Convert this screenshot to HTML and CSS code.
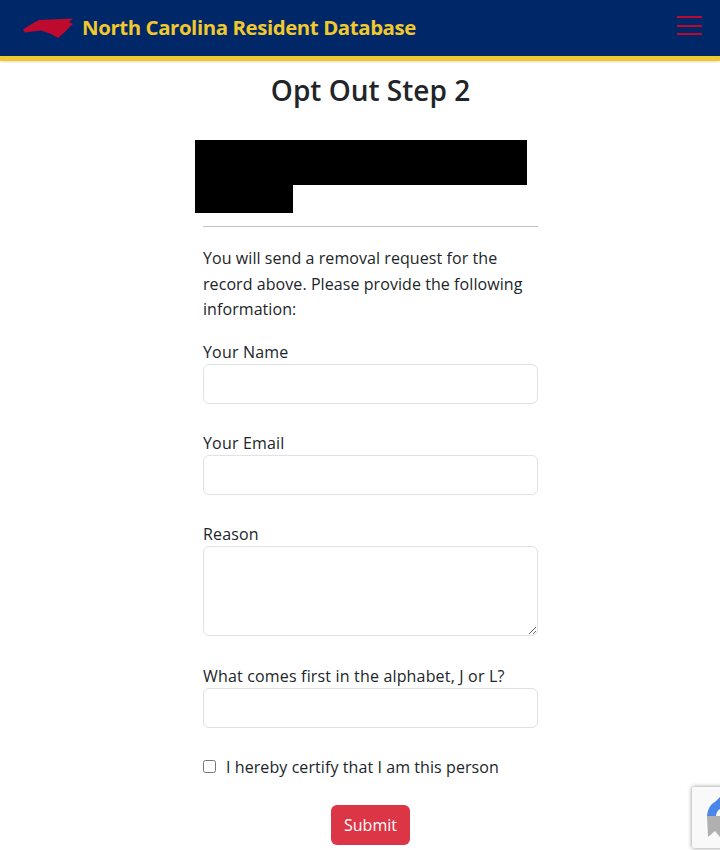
FILE: index.html
```html
<!DOCTYPE html>
<html lang="en">
<head>
<meta charset="utf-8">
<title>Opt Out Step 2</title>
<link rel="stylesheet" href="styles.css">
</head>
<body>
<header class="navbar">
  <a class="brand" href="#">
    <svg class="brand-map" viewBox="0 0 51 22" aria-hidden="true"><path d="M0 13.500 L7 9 L16 4 L50 2.500 L46 6 L50 8 L47 10.500 L43 15 L35 22 L28 18 L18 14.500 L2 16.500 Z"/></svg>
    <span>North Carolina Resident Database</span>
  </a>
  <button class="menu" type="button" aria-label="Menu">
    <span></span><span></span><span></span>
  </button>
</header>
<main class="page">
  <h1 class="title">Opt Out Step 2</h1>
  <div class="redacted">
    <div class="redact-a"></div>
    <div class="redact-b"></div>
  </div>
  <hr class="rule">
  <p class="intro">You will send a removal request for the record above. Please provide the following information:</p>
  <form class="form">
    <div class="field">
      <label for="n">Your Name</label>
      <input id="n" type="text">
    </div>
    <div class="field">
      <label for="e">Your Email</label>
      <input id="e" type="text">
    </div>
    <div class="field field-area">
      <label for="r">Reason</label>
      <textarea id="r"></textarea>
    </div>
    <div class="field">
      <label for="q">What comes first in the alphabet, J or L?</label>
      <input id="q" type="text">
    </div>
    <div class="check">
      <input id="c" type="checkbox">
      <label for="c">I hereby certify that I am this person</label>
    </div>
    <div class="actions"><button class="submit" type="button">Submit</button></div>
  </form>
</main>
<div class="recaptcha" aria-hidden="true">
  <svg viewBox="0 0 28 61" class="recaptcha-icon">
    <path d="M28 10 L24 14 A18 18 0 0 0 15 29 L24 29 A9 9 0 0 1 28 22 Z" fill="#4a86e8"/>
    <path d="M15 29 L28 29 L28 50 L23 44 L16 50 Z" fill="#b0b0b0"/>
  </svg>
</div>
</body>
</html>
```
FILE: styles.css
```css
* { box-sizing: border-box; }
html, body { margin: 0; padding: 0; }
body {
  background: #fff;
  color: #212529;
  font-family: "Open Sans", "Noto Sans", sans-serif;
  font-size: 16px;
  letter-spacing: .17px;
  overflow: hidden;
  height: 850px;
}
.navbar {
  height: 61px;
  background: #002868;
  border-bottom: 5px solid #f1c82e;
  display: flex;
  align-items: center;
  justify-content: space-between;
  padding: 0 18px 0 23px;
  box-shadow: 0 1px 2px rgba(120,110,60,.25);
}
.brand {
  display: flex;
  align-items: center;
  gap: 8px;
  color: #f1c82e;
  text-decoration: none;
  font-size: 20.400px;
  font-weight: 700;
  letter-spacing: -.41px;
  margin-bottom: 2px;
}
.brand-map { width: 51px; height: 22px; display: block; fill: #bf0a30; }
.menu {
  width: 25px;
  height: 19px;
  padding: 0;
  margin-bottom: 5px;
  background: none;
  border: 0;
  display: flex;
  flex-direction: column;
  justify-content: space-between;
}
.menu span { display: block; height: 2px; background: #bf0a30; }
.page {
  width: 335px;
  margin-left: 203px;
}
.title {
  margin: 11px 0 0;
  text-align: center;
  font-size: 28px;
  line-height: 36px;
  font-weight: 600;
  letter-spacing: 0;
}
.redacted { margin: 32px 0 0 -8px; }
.redact-a { width: 332px; height: 45px; background: #000; }
.redact-b { width: 98px; height: 28px; background: #000; }
.rule { margin: 13px 0 0; border: 0; border-top: 1px solid #c4c4c4; }
.intro {
  margin: 19px 0 0;
  line-height: 25.500px;
  letter-spacing: .07px;
}
.form { margin-top: 17px; }
.field { margin-bottom: 27px; }
.field-area { margin-bottom: 28px; }
.field label {
  display: block;
  line-height: 24px;
  height: 24px;
}
.field input, .field textarea {
  display: block;
  width: 335px;
  border: 1px solid #dee2e6;
  border-radius: 6px;
  background: #fff;
  font: inherit;
  margin: 0;
}
.field input { height: 40px; }
.field textarea { height: 90px; resize: vertical; }
.check {
  display: flex;
  align-items: center;
  gap: 10px;
  height: 24px;
  letter-spacing: .08px;
}
.check input {
  width: 13px;
  height: 13px;
  margin: 0;
  appearance: none;
  border: 1px solid #767676;
  border-radius: 2.500px;
  background: #fff;
}
.actions { display: flex; justify-content: center; margin-top: 26px; }
.submit {
  width: 79px;
  height: 40px;
  padding: 0;
  border: 0;
  border-radius: 6px;
  background: #dc3545;
  color: #fff;
  font: inherit;
}
.recaptcha {
  position: fixed;
  left: 692px;
  top: 787px;
  width: 40px;
  height: 61px;
  background: #f9f9f9;
  box-shadow: 0 0 4px rgba(90,90,90,.7);
  border-radius: 2px 0 0 2px;
}
.recaptcha-icon { display: block; width: 28px; height: 61px; }
```
